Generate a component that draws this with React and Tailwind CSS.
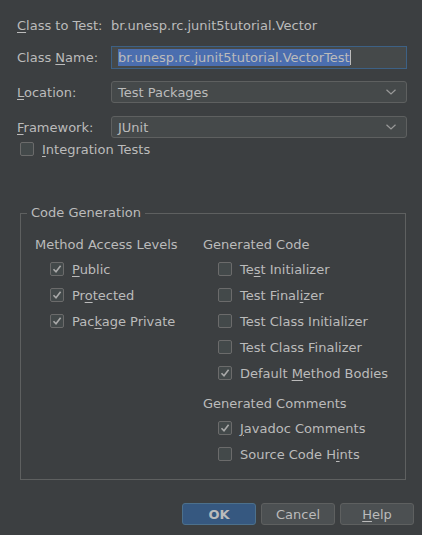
import React from "react";

const font = { fontFamily: '"DejaVu Sans", sans-serif' };

// Underline the mnemonic letter at index
const Mn = ({ text, at }) => {
  if (at == null) return <>{text}</>;
  return (
    <>
      {text.slice(0, at)}
      <span className="underline underline-offset-2">{text[at]}</span>
      {text.slice(at + 1)}
    </>
  );
};

const Check = ({ checked }) => (
  <div className="w-[14px] h-[14px] rounded-[2px] border border-[#6b6b6b] bg-[#43494a] flex items-center justify-center shrink-0">
    {checked && (
      <svg width="10" height="10" viewBox="0 0 10 10">
        <path d="M1.5 5.2 L4 7.8 L8.6 1.8" fill="none" stroke="#a9a9a9" strokeWidth="1.6" />
      </svg>
    )}
  </div>
);

const CheckRow = ({ label, at, checked }) => (
  <div className="h-[26px] flex items-center gap-2 pl-[15px]">
    <Check checked={checked} />
    <span><Mn text={label} at={at} /></span>
  </div>
);

const Chevron = () => (
  <svg width="12" height="8" viewBox="0 0 12 8">
    <path d="M1.5 1.8 L6 6 L10.5 1.8" fill="none" stroke="#9a9a9a" strokeWidth="1.2" />
  </svg>
);

const Combo = ({ value }) => (
  <div className="w-[296px] h-[22px] flex items-center justify-between rounded-[3px] border border-[#5e6060] bg-[#45494a] pl-[6px] pr-[9px]">
    <span>{value}</span>
    <Chevron />
  </div>
);

const FormRow = ({ children, label, at, className = "" }) => (
  <div className={`flex items-center ${className}`}>
    <div className="w-[94px]"><Mn text={label} at={at} /></div>
    {children}
  </div>
);

const Button = ({ children, primary }) => (
  <div
    className={`w-[74px] h-[22px] flex items-center justify-center rounded-[3px] border ${
      primary
        ? "bg-[#365880] border-[#4c708c] font-bold text-[#bbbbbb]"
        : "bg-[#4c5052] border-[#5e6060]"
    }`}
  >
    {children}
  </div>
);

export default function App() {
  return (
    <div
      className="w-[422px] h-[535px] bg-[#3c3f41] text-[#bbbbbb] text-[13px] leading-none flex flex-col"
      style={font}
    >
      <div className="pl-[17px] pr-[15px] pt-[14px]">
        <FormRow label="Class to Test:" at={0} className="h-[22px]">
          <span>br.unesp.rc.junit5tutorial.Vector</span>
        </FormRow>

        <FormRow label="Class Name:" at={6} className="mt-[10px]">
          <div className="w-[296px] h-[23px] flex items-center border border-[#3d6185] bg-[#45494a] pl-[6px]">
            <span className="bg-[#4b6eaf] text-[#bbbbbb] py-[2px]">
              br.unesp.rc.junit5tutorial.VectorTest
            </span>
            <span className="w-px h-[15px] bg-[#bbbbbb]" />
          </div>
        </FormRow>

        <FormRow label="Location:" at={0} className="mt-[12px]">
          <Combo value="Test Packages" />
        </FormRow>

        <FormRow label="Framework:" at={0} className="mt-[13px]">
          <Combo value="JUnit" />
        </FormRow>

        <div className="flex items-center gap-[8px] pl-[3px] h-[18px] mt-[2px]">
          <Check checked={false} />
          <span><Mn text="Integration Tests" at={0} /></span>
        </div>
      </div>

      <div className="relative mt-[55px] ml-[20px] mr-[16px] border border-[#5e6060] pt-[18px] pb-[12px]">
        <div className="absolute -top-[8px] left-[6px] px-[4px] bg-[#3c3f41]">Code Generation</div>
        <div className="flex">
          <div className="w-[182px] pl-[14px]">
            <div className="h-[24px] flex items-center">Method Access Levels</div>
            <CheckRow label="Public" at={0} checked />
            <CheckRow label="Protected" at={2} checked />
            <CheckRow label="Package Private" at={3} checked />
          </div>
          <div>
            <div className="h-[24px] flex items-center">Generated Code</div>
            <CheckRow label="Test Initializer" at={2} />
            <CheckRow label="Test Finalizer" at={10} />
            <CheckRow label="Test Class Initializer" />
            <CheckRow label="Test Class Finalizer" />
            <CheckRow label="Default Method Bodies" at={8} checked />
            <div className="h-[24px] flex items-center mt-[5px]">Generated Comments</div>
            <CheckRow label="Javadoc Comments" at={0} checked />
            <CheckRow label="Source Code Hints" at={13} />
          </div>
        </div>
      </div>

      <div className="mt-auto mb-[10px] pr-[8px] flex justify-end gap-[5px]">
        <Button primary>OK</Button>
        <Button>Cancel</Button>
        <Button><Mn text="Help" at={0} /></Button>
      </div>
    </div>
  );
}
